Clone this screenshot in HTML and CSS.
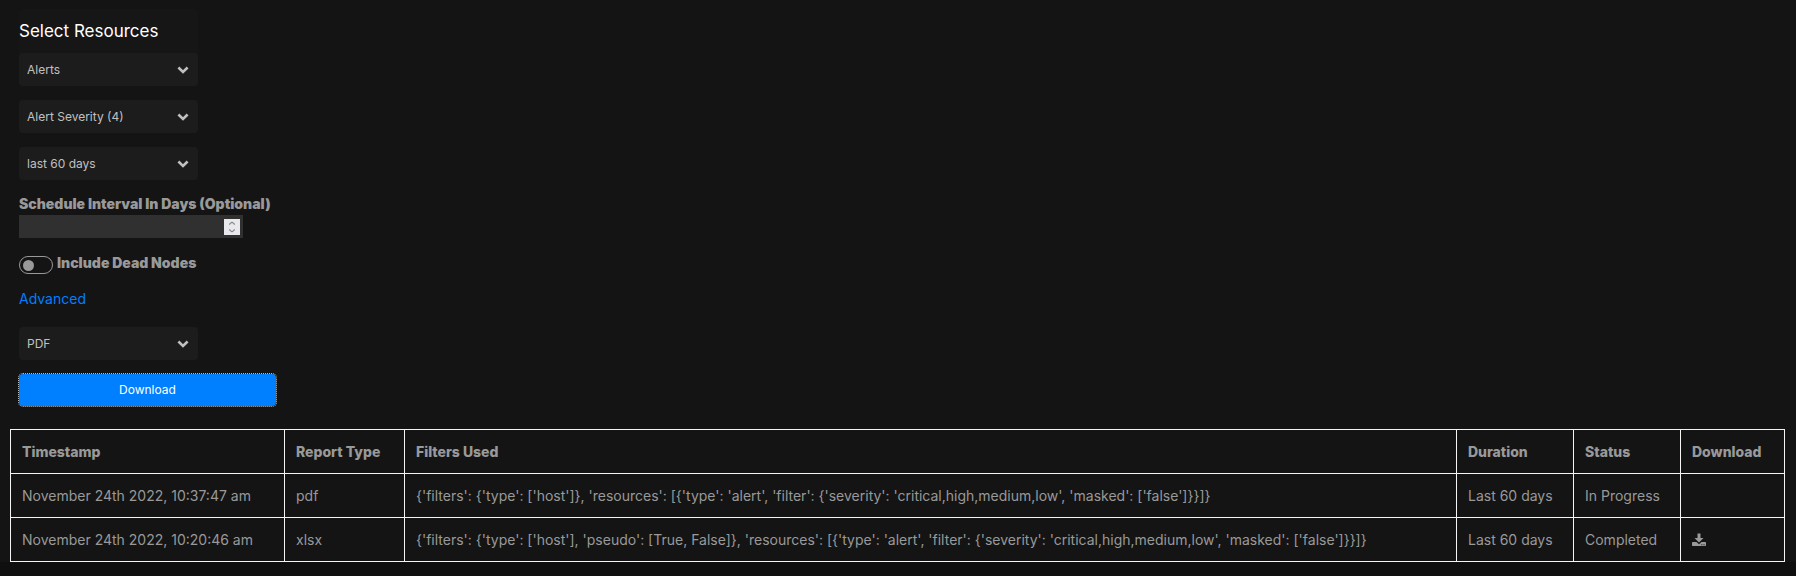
FILE: index.html
```html
<!DOCTYPE html>
<html lang="en">
<head>
<meta charset="utf-8">
<title>Reports</title>
<link rel="stylesheet" href="styles.css">
</head>
<body>
<main class="page">
  <form class="report-form">
    <div class="resource-group">
      <h1 class="heading">Select Resources</h1>
      <div class="dropdown">
        <select class="dropdown-field" aria-label="Resource"><option>Alerts</option></select>
        <svg class="chevron" viewBox="0 0 12 8"><path d="M1.400 1.500 6 5.900 10.600 1.500"/></svg>
      </div>
    </div>
    <div class="dropdown">
      <select class="dropdown-field" aria-label="Alert severity"><option>Alert Severity (4)</option></select>
      <svg class="chevron" viewBox="0 0 12 8"><path d="M1.400 1.500 6 5.900 10.600 1.500"/></svg>
    </div>
    <div class="dropdown">
      <select class="dropdown-field" aria-label="Duration"><option>last 60 days</option></select>
      <svg class="chevron" viewBox="0 0 12 8"><path d="M1.400 1.500 6 5.900 10.600 1.500"/></svg>
    </div>
    <div class="interval">
      <label class="label" for="interval">Schedule Interval In Days (Optional)</label>
      <div class="number">
        <input class="number-field" id="interval" type="number">
        <svg class="stepper" viewBox="0 0 16 16"><path d="M5.500 5.800 6 4.600 8 3.200 10 4.600 10.500 5.800M5.500 10.200 6 11.400 8 12.800 10 11.400 10.500 10.200"/></svg>
      </div>
    </div>
    <div class="toggle-row">
      <input class="toggle" id="dead-nodes" type="checkbox">
      <label class="label" for="dead-nodes">Include Dead Nodes</label>
    </div>
    <a class="advanced" href="#">Advanced</a>
    <div class="dropdown">
      <select class="dropdown-field" aria-label="File type"><option>PDF</option></select>
      <svg class="chevron" viewBox="0 0 12 8"><path d="M1.400 1.500 6 5.900 10.600 1.500"/></svg>
    </div>
    <button class="download" type="button">Download</button>
  </form>
  <table class="reports">
    <colgroup>
      <col class="col-time"><col class="col-type"><col><col class="col-duration"><col class="col-status"><col class="col-download">
    </colgroup>
    <thead>
      <tr><th>Timestamp</th><th>Report Type</th><th>Filters Used</th><th>Duration</th><th>Status</th><th>Download</th></tr>
    </thead>
    <tbody>
      <tr>
        <td>November 24th 2022, 10:37:47 am</td><td>pdf</td>
        <td>{'filters': {'type': ['host']}, 'resources': [{'type': 'alert', 'filter': {'severity': 'critical,high,medium,low', 'masked': ['false']}}]}</td>
        <td>Last 60 days</td><td>In Progress</td><td></td>
      </tr>
      <tr>
        <td>November 24th 2022, 10:20:46 am</td><td>xlsx</td>
        <td>{'filters': {'type': ['host'], 'pseudo': [True, False]}, 'resources': [{'type': 'alert', 'filter': {'severity': 'critical,high,medium,low', 'masked': ['false']}}]}</td>
        <td>Last 60 days</td><td>Completed</td>
        <td><a class="file-link" href="#" aria-label="Download report"><svg class="file-icon" viewBox="0 0 14 14"><path d="M5.500 0.500h3v4.500h3L7 9.500 2.500 5h3zM0.700 9h3.700L7 11.300 9.600 9h3.700q.7 0 .7.700v2.600q0 .7-.7.700H.7q-.7 0-.7-.7V9.700Q0 9 .7 9z"/><path class="file-dots" d="M9.300 11.300h1v1h-1zM11.500 11.300h1v1h-1z"/></svg></a></td>
      </tr>
    </tbody>
  </table>
</main>
</body>
</html>
```
FILE: styles.css
```css
* {
  box-sizing: border-box;
}

body {
  margin: 0;
  background: #0f0f0f;
  color: #999;
  font: 14px/20px Inter, "Open Sans", sans-serif;
}

.page {
  padding: 9px 11px 0 10px;
  background: #141414;
}

.report-form {
  display: flex;
  flex-direction: column;
  align-items: flex-start;
  gap: 14px;
  padding-left: 9px;
  margin-bottom: 23px;
}

.resource-group {
  border-radius: 4px;
  background: #161616;
}

.heading {
  margin: 0;
  padding: 10px 0;
  color: #fff;
  font-size: 17px;
  line-height: 24px;
  font-weight: 400;
}

.dropdown {
  display: grid;
  align-items: center;
  width: 179px;
}

.dropdown-field {
  grid-area: 1 / 1;
  appearance: none;
  height: 33px;
  padding: 0 32px 0 8px;
  border: 0;
  border-radius: 4px;
  background: #1c1c1c;
  color: #c0c0c0;
  font: inherit;
  font-size: 12px;
}

.chevron {
  grid-area: 1 / 1;
  justify-self: end;
  width: 12px;
  height: 8px;
  margin-right: 9px;
  fill: none;
  stroke: #c0c0c0;
  stroke-width: 2.6;
  pointer-events: none;
}

.label {
  font-weight: 900;
}

.interval {
  display: flex;
  flex-direction: column;
  gap: 1px;
}

.number {
  display: grid;
  align-items: center;
  width: 224px;
}

.number-field {
  grid-area: 1 / 1;
  appearance: textfield;
  width: 100%;
  height: 23px;
  padding: 0 24px 0 4px;
  border: 0;
  background: #303030;
  color: #c0c0c0;
  font: inherit;
}

.number-field::-webkit-inner-spin-button {
  appearance: none;
}

.stepper {
  grid-area: 1 / 1;
  justify-self: end;
  width: 16px;
  height: 16px;
  margin-right: 3px;
  background: #e9e9ed;
  fill: none;
  stroke: #85858c;
  stroke-width: 1.2;
}

.toggle-row {
  display: flex;
  gap: 4px;
  padding: 1px 0;
}

.toggle {
  appearance: none;
  display: flex;
  align-items: center;
  width: 34px;
  height: 18px;
  margin: 3px 0 0;
  padding: 0 3px;
  border: 1px solid #999;
  border-radius: 9px;
}

.toggle::before {
  content: "";
  width: 11px;
  height: 11px;
  border-radius: 50%;
  background: #999;
}

.advanced {
  margin-bottom: 4px;
  color: #007fff;
  text-decoration: none;
}

.download {
  width: 257px;
  height: 32px;
  padding: 0;
  border: 0;
  border-radius: 4px;
  outline: 1px dotted #bbb;
  background: #007fff;
  color: #fff;
  font: inherit;
  font-size: 12px;
}

.reports {
  width: 100%;
  border-collapse: collapse;
  table-layout: fixed;
}

.reports th,
.reports td {
  height: 44px;
  padding: 0 10px 0 11px;
  border: 1px solid #f5f5f5;
  text-align: left;
  white-space: nowrap;
}

.reports th {
  font-weight: 800;
}

.col-time {
  width: 274px;
}

.col-type {
  width: 120px;
}

.col-duration {
  width: 117px;
}

.col-status {
  width: 107px;
}

.col-download {
  width: 104px;
}

.file-link {
  display: flex;
}

.file-icon {
  width: 14px;
  height: 14px;
  fill: #999;
}

.file-dots {
  fill: #141414;
}
```
